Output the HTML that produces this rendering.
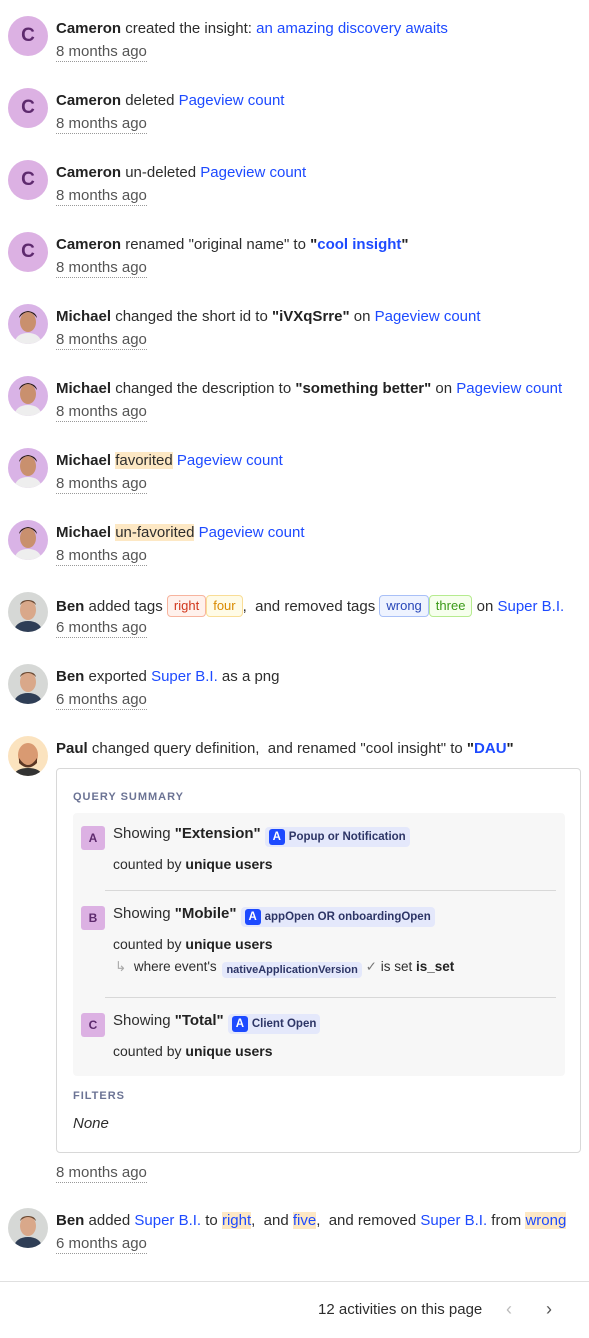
<!DOCTYPE html>
<html><head><meta charset="utf-8"><style>
*{box-sizing:border-box;margin:0;padding:0}
body{width:589px;height:1338px;background:#fff;font-family:"Liberation Sans",sans-serif;font-size:15px;color:#2d2d2d;position:relative;overflow:hidden}
.row{position:absolute;left:0;width:589px}
.av{position:absolute;left:8px;top:0;width:40px;height:40px;border-radius:50%;overflow:hidden}
.c{background:#dcb1e3;color:#5e2a6e;font-size:19px;font-weight:bold;text-align:center;line-height:40px}
.l1{position:absolute;left:56px;top:3px;white-space:nowrap;line-height:20px}
.t{position:absolute;left:56px;top:27px;color:#555;border-bottom:1px dotted #999;line-height:18px}
a{color:#1d4aff;text-decoration:none}
b{font-weight:bold;color:#222}
.hl{background:#fde8c4}
.tag{display:inline-block;border:1px solid;border-radius:4px;font-size:13px;padding:0 6px;line-height:20px;vertical-align:1px}
.box{position:absolute;left:56px;top:768px;width:525px;height:385px;border:1px solid #d8d8d8;border-radius:4px}
.h{position:absolute;left:16px;font-size:11px;font-weight:bold;letter-spacing:1px;color:#6b7394}
.inner{position:absolute;left:16px;top:44px;width:492px;height:263px;background:#f7f7f7;border-radius:4px}
.ltr{position:absolute;left:8px;width:24px;height:24px;background:#dcb1e3;color:#5e2a6e;font-weight:bold;font-size:12px;text-align:center;line-height:24px;border-radius:3px}
.sh{position:absolute;left:40px;white-space:nowrap;font-size:15px}
.ev{display:inline-block;background:#e4e8fb;border-radius:4px;padding:2px 4px;font-size:11.5px;font-weight:bold;color:#2d3566;vertical-align:-2px}
.ev i{display:inline-block;width:16px;height:16px;background:#1d4aff;color:#fff;border-radius:3px;font-style:normal;text-align:center;line-height:16px;margin-right:4px}
.cb{position:absolute;left:40px;font-size:14px}
.sep{position:absolute;left:32px;width:451px;border-top:1px solid #d8d8d8}
</style></head><body>
<svg width="0" height="0" style="position:absolute"><defs>
<g id="m"><rect width="40" height="40" fill="#d9b3e6"/><ellipse cx="20" cy="18" rx="8" ry="10" fill="#c9906e"/><path d="M11 14 Q20 2 29 14 Q28 8 20 7 Q12 8 11 14Z" fill="#2a1c16"/><path d="M6 40 Q8 29 20 29 Q32 29 34 40Z" fill="#eee"/></g>
<g id="b"><rect width="40" height="40" fill="#d6d8d6"/><ellipse cx="20" cy="18" rx="8" ry="10" fill="#d9a88a"/><path d="M12 13 Q20 5 28 13 Q27 8 20 8 Q13 8 12 13Z" fill="#6b4a34"/><path d="M5 40 Q8 29 20 29 Q32 29 35 40Z" fill="#2f3e56"/></g>
<g id="p"><rect width="40" height="40" fill="#fbe3bf"/><ellipse cx="20" cy="19" rx="10" ry="12" fill="#d99a72"/><path d="M11 22 Q20 36 29 22 L29 27 Q20 36 11 27Z" fill="#5a3624"/><path d="M5 40 Q8 32 20 32 Q32 32 35 40Z" fill="#333"/></g>
</defs></svg>

<div class="row" style="top:16px"><div class="av c">C</div><div class="l1"><b>Cameron</b> created the insight: <a>an amazing discovery awaits</a></div><div class="t">8 months ago</div></div>
<div class="row" style="top:88px"><div class="av c">C</div><div class="l1"><b>Cameron</b> deleted <a>Pageview count</a></div><div class="t">8 months ago</div></div>
<div class="row" style="top:160px"><div class="av c">C</div><div class="l1"><b>Cameron</b> un-deleted <a>Pageview count</a></div><div class="t">8 months ago</div></div>
<div class="row" style="top:232px"><div class="av c">C</div><div class="l1"><b>Cameron</b> renamed "original name" to <b>"<a>cool insight</a>"</b></div><div class="t">8 months ago</div></div>
<div class="row" style="top:304px"><svg class="av" viewBox="0 0 40 40"><use href="#m"/></svg><div class="l1"><b>Michael</b> changed the short id to <b>"iVXqSrre"</b> on <a>Pageview count</a></div><div class="t">8 months ago</div></div>
<div class="row" style="top:376px"><svg class="av" viewBox="0 0 40 40"><use href="#m"/></svg><div class="l1"><b>Michael</b> changed the description to <b>"something better"</b> on <a>Pageview count</a></div><div class="t">8 months ago</div></div>
<div class="row" style="top:448px"><svg class="av" viewBox="0 0 40 40"><use href="#m"/></svg><div class="l1"><b>Michael</b> <span class="hl">favorited</span> <a>Pageview count</a></div><div class="t">8 months ago</div></div>
<div class="row" style="top:520px"><svg class="av" viewBox="0 0 40 40"><use href="#m"/></svg><div class="l1"><b>Michael</b> <span class="hl">un-favorited</span> <a>Pageview count</a></div><div class="t">8 months ago</div></div>
<div class="row" style="top:592px"><svg class="av" viewBox="0 0 40 40"><use href="#b"/></svg><div class="l1"><b>Ben</b> added tags <span class="tag" style="color:#d1361c;border-color:#f7b49e;background:#fff1ec">right</span><span class="tag" style="color:#d98a00;border-color:#f9dd96;background:#fffbe6">four</span>, &nbsp;and removed tags <span class="tag" style="color:#2746b8;border-color:#a9c0f7;background:#eef3ff">wrong</span><span class="tag" style="color:#3a9a17;border-color:#b6eb8f;background:#f6ffed">three</span> on <a>Super B.I.</a></div><div class="t">6 months ago</div></div>
<div class="row" style="top:664px"><svg class="av" viewBox="0 0 40 40"><use href="#b"/></svg><div class="l1"><b>Ben</b> exported <a>Super B.I.</a> as a png</div><div class="t">6 months ago</div></div>
<div class="row" style="top:736px"><svg class="av" viewBox="0 0 40 40"><use href="#p"/></svg><div class="l1"><b>Paul</b> changed query definition, &nbsp;and renamed "cool insight" to <b>"<a>DAU</a>"</b></div></div>

<div class="box">
<div class="h" style="top:22px">QUERY SUMMARY</div>
<div class="inner">
 <div class="ltr" style="top:13px">A</div>
 <div class="sh" style="top:12px">Showing <b>"Extension"</b> <span class="ev"><i>A</i>Popup or Notification</span></div>
 <div class="cb" style="top:43px">counted by <b>unique users</b></div>
 <div class="sep" style="top:77px"></div>
 <div class="ltr" style="top:93px">B</div>
 <div class="sh" style="top:92px">Showing <b>"Mobile"</b> <span class="ev"><i>A</i>appOpen OR onboardingOpen</span></div>
 <div class="cb" style="top:123px">counted by <b>unique users</b></div>
 <div class="cb" style="top:146px;left:42px;white-space:nowrap;font-size:13.5px"><span style="color:#aaa">↳</span> &nbsp;where event's <span class="ev" style="font-size:11px;margin-left:2px">nativeApplicationVersion</span> <span style="color:#777">✓</span> is set <b>is_set</b></div>
 <div class="sep" style="top:184px"></div>
 <div class="ltr" style="top:200px">C</div>
 <div class="sh" style="top:199px">Showing <b>"Total"</b> <span class="ev"><i>A</i>Client Open</span></div>
 <div class="cb" style="top:230px">counted by <b>unique users</b></div>
</div>
<div class="h" style="top:321px">FILTERS</div>
<div style="position:absolute;left:16px;top:346px;font-style:italic">None</div>
</div>
<div class="t" style="top:1164px">8 months ago</div>

<div class="row" style="top:1208px"><svg class="av" viewBox="0 0 40 40"><use href="#b"/></svg><div class="l1"><b>Ben</b> added <a>Super B.I.</a> to <a class="hl">right</a>, &nbsp;and <a class="hl">five</a>, &nbsp;and removed <a>Super B.I.</a> from <a class="hl">wrong</a></div><div class="t">6 months ago</div></div>

<div style="position:absolute;left:0;top:1281px;width:589px;border-top:1px solid #e0e0e0"></div>
<div style="position:absolute;left:318px;top:1301px">12 activities on this page</div>
<div style="position:absolute;left:506px;top:1299px;color:#bbb;font-size:18px">‹</div>
<div style="position:absolute;left:546px;top:1299px;color:#555;font-size:18px">›</div>
</body></html>
